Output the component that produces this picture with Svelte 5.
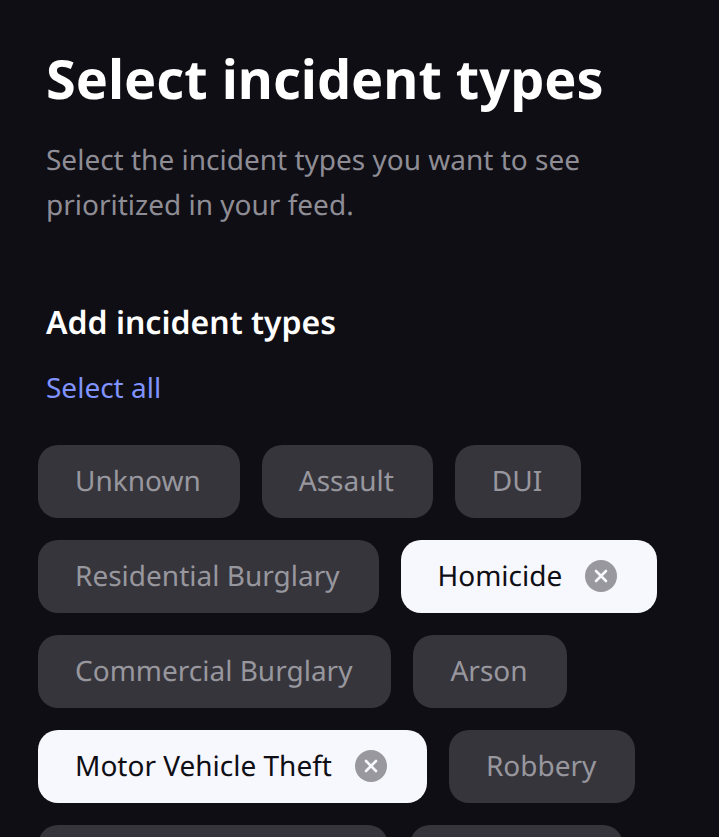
<script lang="ts">
  const chips = [
    { label: 'Unknown' },
    { label: 'Assault' },
    { label: 'DUI' },
    { label: 'Residential Burglary' },
    { label: 'Homicide', selected: true },
    { label: 'Commercial Burglary' },
    { label: 'Arson' },
    { label: 'Motor Vehicle Theft', selected: true },
    { label: 'Robbery' },
    { label: 'Disturbing the Peace' },
    { label: 'Vandalism' }
  ];
</script>

<main class="page">
  <h1>Select incident types</h1>
  <p class="sub">Select the incident types you want to see prioritized in your feed.</p>
  <h2>Add incident types</h2>
  <button class="select-all">Select all</button>
  <div class="chips">
    {#each chips as chip}
      <div class="chip" class:selected={chip.selected}>
        <span>{chip.label}</span>
        {#if chip.selected}
          <svg class="remove" width="32" height="32" viewBox="0 0 32 32" aria-hidden="true">
            <circle cx="16" cy="16" r="16" fill="#99989f" />
            <path d="M11 11 L21 21 M21 11 L11 21" stroke="#f7f7fe" stroke-width="2.6" stroke-linecap="round" />
          </svg>
        {/if}
      </div>
    {/each}
  </div>
</main>

<style>
  :global(body) {
    background: #0e0e14;
    font-family: 'Noto Sans', sans-serif;
    text-rendering: geometricPrecision;
    height: 837px;
    overflow: hidden;
  }
  .page {
    padding: 39px 38px 0;
  }
  h1 {
    margin: 0 0 0 8px;
    font-size: 54px;
    line-height: 78px;
    font-weight: 700;
    color: #fff;
  }
  .sub {
    margin: 21px 70px 0 8px;
    font-size: 28px;
    line-height: 45px;
    color: #8e8d95;
  }
  h2 {
    margin: 73px 0 0 8px;
    font-size: 32px;
    line-height: 44px;
    font-weight: 600;
    color: #fff;
  }
  .select-all {
    display: block;
    margin: 20px 0 0 8px;
    padding: 0;
    background: none;
    border: none;
    font: inherit;
    font-size: 28px;
    line-height: 44px;
    color: #8093ff;
  }
  .chips {
    display: flex;
    flex-wrap: wrap;
    gap: 22px;
    margin-top: 36px;
  }
  .chip {
    display: flex;
    align-items: center;
    gap: 23px;
    height: 73px;
    box-sizing: border-box;
    padding: 0 39px 2px 37px;
    border-radius: 20px;
    background: #36353c;
    color: #98979e;
    font-size: 28px;
  }
  .chip.selected {
    background: #f7f7fe;
    color: #0e0e14;
    padding-right: 40px;
  }
</style>
